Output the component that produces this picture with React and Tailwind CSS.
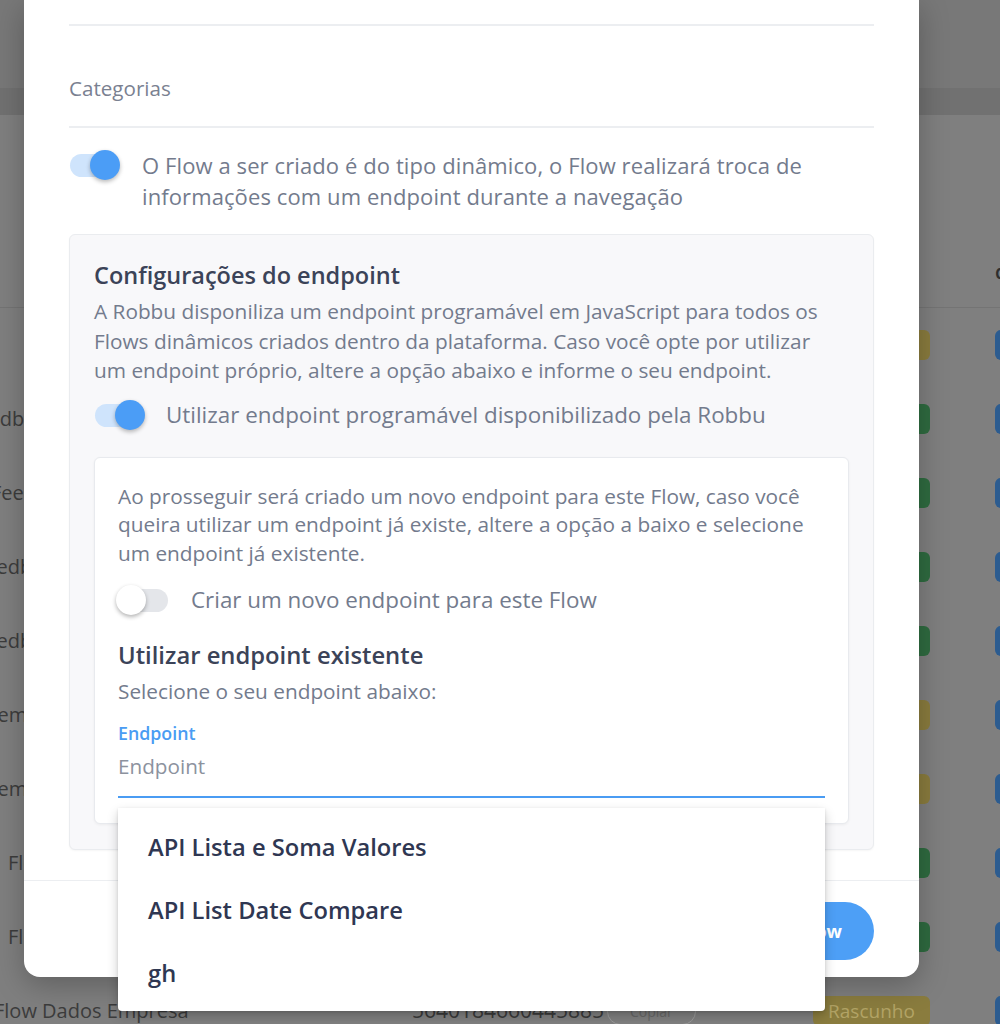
import React from "react";

function ToggleOn() {
  return (
    <div className="relative h-[30px] w-[51px] shrink-0">
      <div className="absolute left-[1px] top-[4px] h-[23px] w-[46px] rounded-full bg-[#cfe4fc]" />
      <div className="absolute right-0 top-0 h-[30px] w-[30px] rounded-full bg-[#4b9df6] shadow-[0_2px_4px_rgba(0,0,0,0.28)]" />
    </div>
  );
}

function ToggleOff() {
  return (
    <div className="relative ml-[-2px] h-[30px] w-[53px] shrink-0">
      <div className="absolute left-[6px] top-[4px] h-[23px] w-[46px] rounded-full bg-[#e4e6ea]" />
      <div className="absolute left-0 top-0 h-[30px] w-[30px] rounded-full bg-white shadow-[0_2px_4px_rgba(0,0,0,0.3)]" />
    </div>
  );
}

const rows = [
  { name: "", badge: "y", off: "ml-0" },
  { name: "Feedback", badge: "g", off: "ml-[-33px]" },
  { name: "Feedback", badge: "g", off: "ml-[-9px]" },
  { name: "Feedback", badge: "g", off: "ml-[-25px]" },
  { name: "Feedback", badge: "g", off: "ml-[-25px]" },
  { name: "Lembrete", badge: "y", off: "ml-[-13px]" },
  { name: "Lembrete", badge: "y", off: "ml-[-13px]" },
  { name: "Flow Teste", badge: "g", off: "ml-[8px]" },
  { name: "Flow Cliente", badge: "g", off: "ml-[8px]" },
  { name: "Flow Dados Empresa", badge: "y", off: "ml-[-6px]" },
];

const body = "text-[#737b8d]";

export default function App() {
  return (
    <div className="relative h-[1024px] w-[1000px] overflow-hidden bg-[#7f7f7f] font-['Open_Sans',sans-serif]">
      {/* underlying page (dimmed by the dialog overlay) */}
      <div className="h-[88px] bg-[#787878]" />
      <div className="h-[27px] bg-[#717171]" />
      <div className="flex h-[193px] items-end border-b border-[#747474] pb-[20px]">
        <div className="ml-[995px] whitespace-nowrap text-[20px] font-semibold text-[#2e2e2e]">data</div>
      </div>
      {rows.map((r, i) => (
        <div key={i} className="flex h-[74px] items-center whitespace-nowrap">
          <div className="w-[412px] shrink-0 overflow-hidden">
            <div className={"text-[20px] text-[#3c3c3c] " + r.off}>{r.name}</div>
          </div>
          <div className="w-[195px] shrink-0 overflow-hidden text-[21px] text-[#3a3a3a]">5640184660445885</div>
          <div className="w-[206px] shrink-0">
            <span className="rounded-full border border-[#9a9a9a] px-[22px] py-[3px] text-[14px] text-[#666]">Copiar</span>
          </div>
          <div className="w-[182px] shrink-0">
            <div
              className={
                "flex h-[30px] w-[117px] items-center justify-center rounded-[6px] text-[19px] " +
                (r.badge === "y" ? "bg-[#8a7c3e] text-[#b3a466]" : "bg-[#2f6b40] text-[#5e9a6e]")
              }
            >
              {r.badge === "y" ? "Rascunho" : "Publicado"}
            </div>
          </div>
          <div className="h-[30px] w-[40px] shrink-0 rounded-[6px] bg-[#2c5c90]" />
        </div>
      ))}

      {/* modal */}
      <div className="absolute left-[24px] top-0 w-[895px] rounded-b-[16px] bg-white shadow-[0_8px_30px_rgba(0,0,0,0.25)]">
        <div className="px-[45px] pt-[24px]">
          <div className="h-[2px] bg-[#eceef1]" />
          <div className="mt-[48px] text-[20.6px] leading-[28px] text-[#7a8191]">Categorias</div>
          <div className="mt-[24px] h-[2px] bg-[#eceef1]" />
          <div className="mt-[22px] flex items-start gap-[22px]">
            <ToggleOn />
            <p className={"text-[22px] leading-[31px] tracking-[0.1px] " + body}>
              O Flow a ser criado é do tipo dinâmico, o Flow realizará troca de
              <br />
              informações com um endpoint durante a navegação
            </p>
          </div>

          {/* endpoint card */}
          <div className="mt-[22px] rounded-[6px] border border-[#eaecef] bg-[#f8f8fa] px-[24px] pb-[25px] pt-[25px] shadow-[0_1px_2px_rgba(0,0,0,0.04)]">
            <div className="text-[23.5px] font-semibold leading-[30px] text-[#3b4358]">Configurações do endpoint</div>
            <p className={"mt-[7px] text-[20.8px] leading-[29.5px] " + body}>
              A Robbu disponiliza um endpoint programável em JavaScript para todos os
              <br />
              Flows dinâmicos criados dentro da plataforma. Caso você opte por utilizar
              <br />
              um endpoint próprio, altere a opção abaixo e informe o seu endpoint.
            </p>
            <div className="mt-[14px] flex items-center gap-[21px]">
              <ToggleOn />
              <span className={"text-[22.4px] leading-[30px] " + body}>Utilizar endpoint programável disponibilizado pela Robbu</span>
            </div>

            {/* inner card */}
            <div className="mt-[27px] rounded-[6px] border border-[#e8eaee] bg-white px-[23px] pb-[25px] pt-[24px] shadow-[0_1px_3px_rgba(0,0,0,0.05)]">
              <p className={"text-[20.8px] leading-[28.5px] " + body}>
                Ao prosseguir será criado um novo endpoint para este Flow, caso você
                <br />
                queira utilizar um endpoint já existe, altere a opção a baixo e selecione
                <br />
                um endpoint já existente.
              </p>
              <div className="mt-[18px] flex items-center gap-[22px]">
                <ToggleOff />
                <span className={"text-[22.4px] leading-[30px] " + body}>Criar um novo endpoint para este Flow</span>
              </div>
              <div className="mt-[25px] text-[23.8px] font-semibold leading-[30px] text-[#3b4358]">Utilizar endpoint existente</div>
              <div className={"mt-[7px] text-[20.8px] leading-[28px] " + body}>Selecione o seu endpoint abaixo:</div>

              <div className="relative">
                <div className="mt-[17px] text-[17.8px] font-semibold leading-[22px] text-[#4a9cf3]">Endpoint</div>
                <div className="mt-[8px] text-[20.7px] leading-[28px] text-[#8c929e]">Endpoint</div>
                <div className="mt-[16px] h-[2px] bg-[#4a9cf3]" />

                {/* dropdown menu */}
                <div className="absolute left-0 right-0 top-[calc(100%+10px)] z-10 rounded-b-[4px] bg-white pb-[6px] pt-[8px] shadow-[0_5px_12px_rgba(0,0,0,0.2),0_1px_3px_rgba(0,0,0,0.12)]">
                  {["API Lista e Soma Valores", "API List Date Compare", "gh"].map((t) => (
                    <div key={t} className="flex h-[63px] items-center px-[30px] text-[23.7px] font-semibold text-[#2f3752]">
                      {t}
                    </div>
                  ))}
                </div>
              </div>
            </div>
          </div>
        </div>

        {/* footer */}
        <div className="mt-[30px] h-[1px] bg-[#eceef1]" />
        <div className="flex justify-end gap-4 px-[45px] pb-[17px] pt-[21px]">
          <button className="h-[58px] rounded-full px-[32px] text-[18px] font-bold text-[#4a9cf3]">Cancelar</button>
          <button className="h-[58px] rounded-full bg-[#4d9ff6] px-[32px] text-[18px] font-bold text-white">Criar Flow</button>
        </div>
      </div>
    </div>
  );
}
